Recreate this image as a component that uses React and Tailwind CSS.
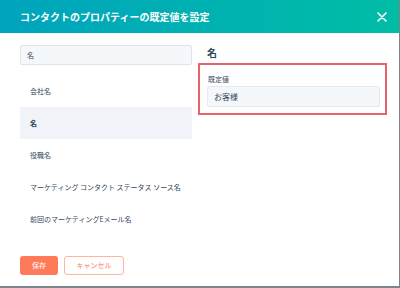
import React from "react";

const font = { fontFamily: '"Noto Sans CJK JP", "Noto Sans", sans-serif' };

export default function App() {
  const items = [
    "会社名",
    "名",
    "役職名",
    "マーケティング コンタクト ステータス ソース名",
    "前回のマーケティングEメール名",
  ];
  return (
    <div className="w-[400px] h-[288px] bg-[#7c848c]" style={font}>
      <div className="w-[399px] h-[286px] bg-white flex flex-col">
        <div className="h-[33px] flex items-center justify-between pl-[20px] pr-[12px] bg-gradient-to-r from-[#00a4bd] to-[#00bda5]">
          <span className="text-white text-[10px] font-bold leading-none">
            コンタクトのプロパティーの既定値を設定
          </span>
          <svg width="10" height="10" viewBox="0 0 10 10">
            <path d="M1 1 L9 9 M9 1 L1 9" stroke="white" strokeWidth="1.6" strokeLinecap="round" />
          </svg>
        </div>
        <div className="flex">
          <div className="w-[172px] ml-[20px] pt-[12px] flex flex-col">
            <div className="h-[20px] bg-[#f5f8fa] border border-[#dfe3eb] rounded-[2px] flex items-center pl-[6px] text-[7px] text-[#33475b]">
              名
            </div>
            <div className="mt-[10px] flex flex-col">
              {items.map((t, i) => (
                <div
                  key={i}
                  className={
                    i === 1
                      ? "h-[32px] flex items-center pl-[10px] text-[7px] font-bold text-[#33475b] bg-[#f0f3f7]"
                      : "h-[32px] flex items-center pl-[10px] text-[7px] text-[#33475b]"
                  }
                >
                  {t}
                </div>
              ))}
            </div>
            <div className="mt-[21px] flex gap-[6px]">
              <div className="w-[38px] h-[19px] rounded-[3px] bg-[#ff7a59] text-white text-[7px] flex items-center justify-center">
                保存
              </div>
              <div className="w-[60px] h-[19px] rounded-[3px] border border-[#ffb59f] text-[#ff7a59] text-[7px] flex items-center justify-center">
                キャンセル
              </div>
            </div>
          </div>
          <div className="ml-[6px] w-[189px] pt-[13px] flex flex-col">
            <div className="pl-[9px] text-[10px] leading-[14px] font-bold text-[#33475b]">名</div>
            <div className="mt-[3px] h-[52px] border-2 border-[#e8626a] pl-[7px] pr-[5px] pt-[9px]">
              <div className="text-[7px] leading-[10px] text-[#33475b] pl-[1px]">既定値</div>
              <div className="mt-[2px] h-[21px] bg-[#f5f8fa] border border-[#e5eaf0] rounded-[2px] flex items-center pl-[6px] text-[8px] text-[#33475b]">
                お客様
              </div>
            </div>
          </div>
        </div>
      </div>
    </div>
  );
}
